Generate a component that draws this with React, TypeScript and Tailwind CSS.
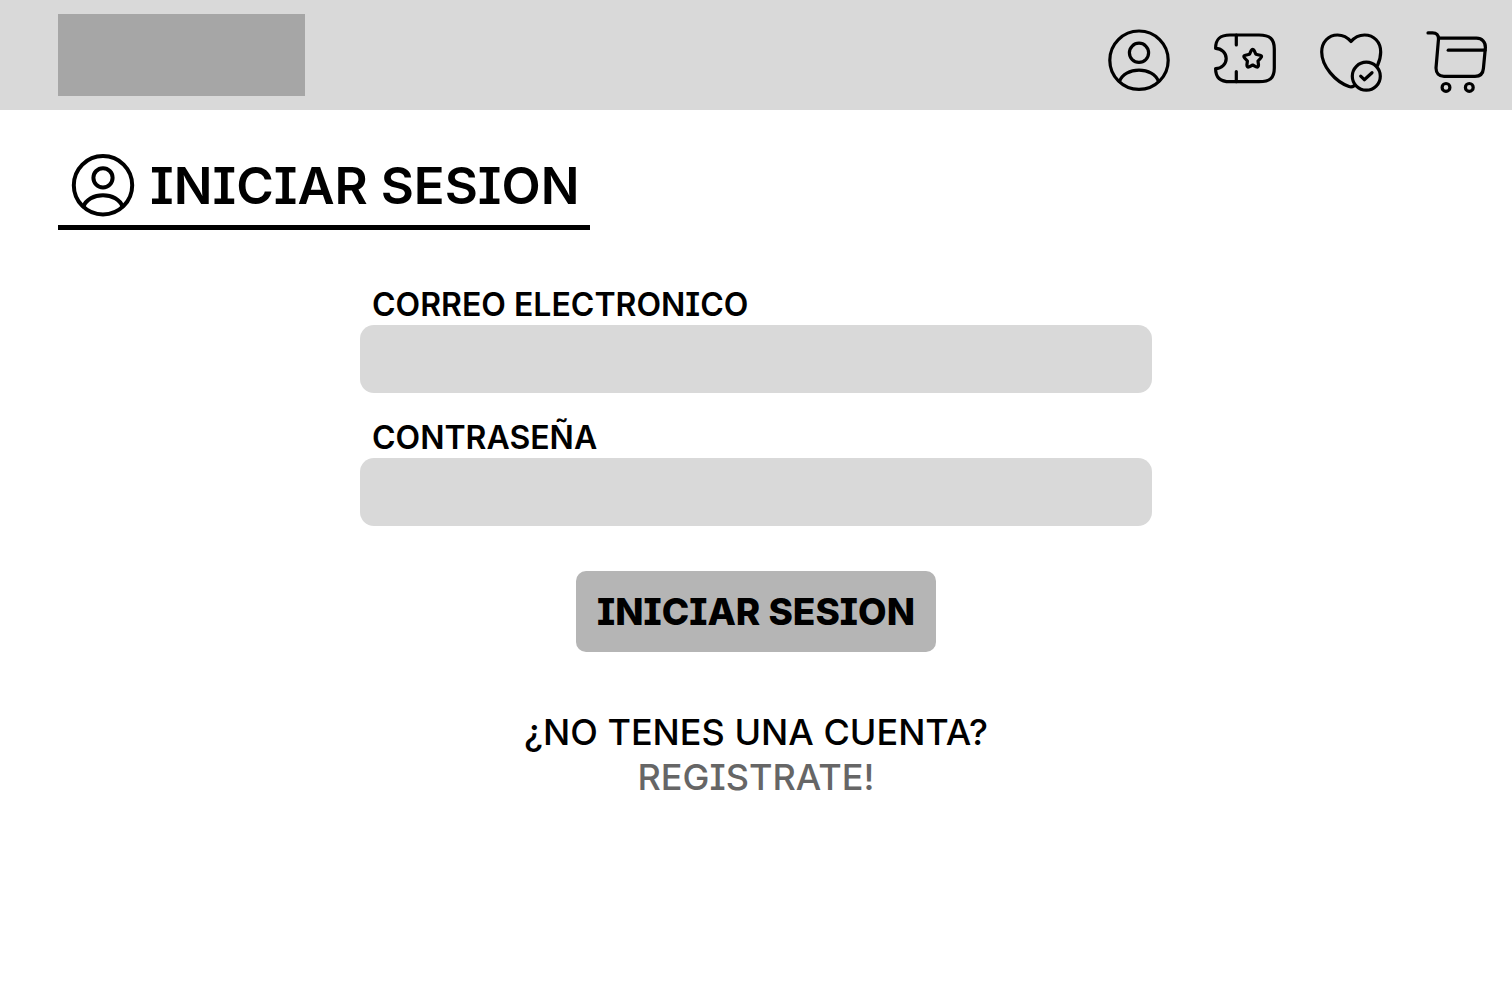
import React from "react";

type IconProps = { className?: string; strokeWidth?: number; children?: React.ReactNode };

function Icon({ className = "size-16", strokeWidth = 3.2, children }: IconProps) {
  return (
    <svg
      viewBox="0 0 64 64"
      className={className}
      fill="none"
      stroke="currentColor"
      strokeWidth={strokeWidth}
      strokeLinecap="round"
      strokeLinejoin="round"
      overflow="visible"
      aria-hidden="true"
    >
      {children}
    </svg>
  );
}

function UserIcon({ strokeWidth = 3.2 }: { strokeWidth?: number }) {
  return (
    <Icon strokeWidth={strokeWidth}>
      <circle cx="33" cy="31.2" r="29.2" />
      <circle cx="33" cy="23.8" r="9.6" />
      <path d="M13.5 52.5C16 45.5 24 41.2 33 41.2S50 45.5 52.5 52.5" />
    </Icon>
  );
}

function TicketIcon() {
  return (
    <Icon>
      <path d="M18 6H47C58 6 62.3 10 62.3 20V39C62.3 49 58 52.7 47 52.7H18C8 52.7 3.6 48.5 3.6 39.5C9.5 39.5 14.2 35 14.2 29.5S9.5 19.3 3.6 19.3C3.6 10 8 6 18 6Z" />
      <path d="M24.3 6V16M24.3 42.5V52.7" />
      <path d="M39.2 21.6Q40.7 19.2 42.2 21.6L43.8 25.2L48 26.2Q50.7 27 48.8 29L46 32L46.5 36Q46.5 38.8 44.2 37.8L40.7 36L37.2 37.8Q34.9 38.8 34.9 36L35.4 32L32.6 29Q30.7 27 33.4 26.2L37.6 25.2Z" />
    </Icon>
  );
}

function FavoriteIcon() {
  return (
    <Icon>
      <path d="M36 56.9C34.5 57.9 33 58.2 31 57.5C17 52.5 3.7 37 3.7 23C3.7 13 10.5 6 19.5 6C25 6 29.5 8.3 33 12.6C36.5 8.3 41 6 46.5 6C56 6 62.7 13 62.7 23C62.7 27.5 61.5 32 59.5 36.5" />
      <circle cx="48.3" cy="47.2" r="14" />
      <path d="M42.7 47.2L46.3 50.7L54 43.7" />
    </Icon>
  );
}

function CartIcon() {
  return (
    <Icon>
      <path d="M4 3.9H8.5C12.5 3.9 14.6 6 14.5 10L12 39C12 44 15 47.3 20 47.3H51C56 47.3 59 44.5 59.4 39.5L61.4 18.5C61.7 13 58 9.2 52.5 9.2H14.7" />
      <path d="M24.2 21.2H61" />
      <circle cx="22" cy="58.4" r="3.9" />
      <circle cx="45.3" cy="58.4" r="3.9" />
    </Icon>
  );
}

function NavLink({ label, children }: { label: string; children: React.ReactNode }) {
  return (
    <a href="#" aria-label={label} className="block">
      {children}
    </a>
  );
}

function Field({ id, label, type }: { id: string; label: string; type: string }) {
  return (
    <div className="flex flex-col">
      <label htmlFor={id} className="pl-3 text-[32px] leading-10 font-semibold">
        {label}
      </label>
      <input id={id} type={type} className="h-[68px] w-full rounded-[14px] bg-[#d9d9d9] px-4 text-2xl" />
    </div>
  );
}

export default function App() {
  return (
    <div className="min-h-screen bg-white font-['Inter',sans-serif] text-black [font-feature-settings:'cv08']">
      <header className="flex h-[110px] items-center justify-between bg-[#d9d9d9] pr-6 pl-[58px]">
        <div className="h-[82px] w-[247px] bg-[#a6a6a6]" />
        <nav className="flex gap-[42px] pt-3">
          <NavLink label="Cuenta"><UserIcon /></NavLink>
          <NavLink label="Cupones"><TicketIcon /></NavLink>
          <NavLink label="Favoritos"><FavoriteIcon /></NavLink>
          <NavLink label="Carrito"><CartIcon /></NavLink>
        </nav>
      </header>

      <main className="pt-11">
        <div className="ml-[58px] flex w-fit items-center gap-4 border-b-[5px] border-black pr-2.5 pb-[7px] pl-3">
          <UserIcon strokeWidth={4} />
          <h1 className="text-[51px] leading-[64px] font-semibold">INICIAR SESION</h1>
        </div>

        <form className="mx-auto mt-[55px] flex max-w-[792px] flex-col gap-[25px]" onSubmit={(e) => e.preventDefault()}>
          <Field id="email" label="CORREO ELECTRONICO" type="email" />
          <Field id="password" label="CONTRASEÑA" type="password" />
          <button type="submit" className="mx-auto mt-5 h-[81px] rounded-[10px] bg-[#b5b5b5] px-[21px] text-[37px] leading-[45px] font-extrabold">
            INICIAR SESION
          </button>
        </form>

        <div className="mt-[58px] flex flex-col items-center text-[36px] leading-[45px] font-medium">
          <p>¿NO TENES UNA CUENTA?</p>
          <a href="#" className="text-[#666666]">REGISTRATE!</a>
        </div>
      </main>
    </div>
  );
}
